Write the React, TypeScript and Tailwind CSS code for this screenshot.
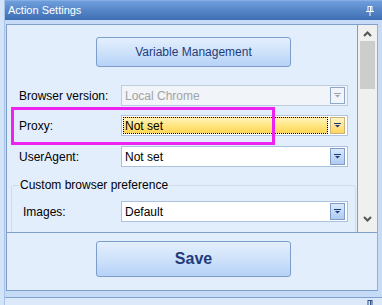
import React from "react";

const FONT = "font-['Liberation_Sans',Arial,sans-serif]";

function Arrow({ color = "#1c3b7c" }: { color?: string }) {
  return (
    <svg width="7" height="5" viewBox="0 0 7 5">
      <rect x="0" y="0" width="7" height="1" fill={color} />
      <polygon points="1,2 6,2 3.5,4.6" fill={color} />
    </svg>
  );
}

function Combo({ value, variant }: { value: string; variant?: "disabled" | "focus" }) {
  if (variant === "disabled") {
    return (
      <div className="w-[227px] h-[21px] border border-[#bccbdd] bg-[#f1f4f9] flex items-center">
        <span className="flex-1 pl-[3px] text-[12px] text-[#a3a3a3]">{value}</span>
        <div className="w-[15px] h-[17px] mr-[2px] border border-[#8fa6c6] flex items-center justify-center">
          <Arrow color="#9aa3ae" />
        </div>
      </div>
    );
  }
  if (variant === "focus") {
    return (
      <div className="w-[227px] h-[21px] border border-[#b2c5de] bg-white flex items-center">
        <div className="flex-1 h-[17px] ml-[1px] mr-[2px] border border-dotted border-black bg-gradient-to-b from-[#fff3b8] via-[#ffe680] to-[#ffd552] flex items-center">
          <span className="pl-[1px] text-[12px] text-black">{value}</span>
        </div>
        <div className="w-[15px] h-[17px] mr-[2px] border border-[#c9b37a] bg-gradient-to-b from-[#fff4c4] to-[#ffd65a] flex items-center justify-center">
          <Arrow />
        </div>
      </div>
    );
  }
  return (
    <div className="w-[227px] h-[21px] border border-[#abc1de] bg-white flex items-center">
      <span className="flex-1 pl-[3px] text-[12px] text-black">{value}</span>
      <div className="w-[15px] h-[17px] mr-[2px] border border-[#7f9dc6] bg-gradient-to-b from-[#dae8fc] to-[#aecbf3] flex items-center justify-center">
        <Arrow />
      </div>
    </div>
  );
}

function Row({ label, children, labelW = "w-[114px]", pad = "pl-[12px]" }: { label: string; children: React.ReactNode; labelW?: string; pad?: string }) {
  return (
    <div className="flex items-center">
      <span className={`${labelW} ${pad} shrink-0 text-[12px] text-black`}>{label}</span>
      {children}
    </div>
  );
}

function Pin({ color = "white" }: { color?: string }) {
  return (
    <svg width="8" height="10" viewBox="0 0 8 10">
      <rect x="2" y="0.5" width="4" height="5" fill="none" stroke={color} />
      <rect x="4" y="1" width="1" height="4" fill={color} />
      <rect x="0" y="5" width="8" height="1" fill={color} />
      <rect x="3.5" y="6" width="1" height="4" fill={color} />
    </svg>
  );
}

function Chevron({ up }: { up?: boolean }) {
  return (
    <svg width="9" height="6" viewBox="0 0 9 6">
      <polyline
        points={up ? "1,5 4.5,1.5 8,5" : "1,1 4.5,4.5 8,1"}
        fill="none"
        stroke="#555"
        strokeWidth="2"
      />
    </svg>
  );
}

export default function App() {
  return (
    <div className={`${FONT} w-[382px] h-[305px] bg-[#c6dbf6] flex overflow-hidden`}>
      <div className="w-[5px] shrink-0 bg-[#d3e3f8] border-r border-[#a9c3e6]" />
      <div className="flex-1 flex flex-col">
        <div className="h-[20px] shrink-0 bg-gradient-to-b from-[#6f9edc] to-[#3e6eb3] border-t border-[#86aee3] flex items-center justify-between pl-[3px] pr-[8px]">
          <span className="text-[11px] text-white">Action Settings</span>
          <Pin />
        </div>
        <div className="pt-[4px] pl-[1px] shrink-0">
          <div className="w-[372px] h-[267px] border border-[#7f9fca] border-r-[#a5acb6] flex flex-col bg-[#e3eefd]">
            <div className="h-[207px] flex shrink-0">
              <div className="relative w-[351px] overflow-hidden border-r border-[#7f9fca] flex flex-col">
                <button className="shrink-0 mt-[12px] ml-[89px] w-[195px] h-[30px] rounded-[3px] border border-[#7d9dcb] bg-gradient-to-b from-[#e3effd] via-[#cfe2fa] to-[#b5d2f7] text-[12px] text-[#1f3c7a]">
                  Variable Management
                </button>
                <div className="shrink-0 mt-[18px]">
                  <Row label="Browser version:">
                    <Combo value="Local Chrome" variant="disabled" />
                  </Row>
                </div>
                <div className="shrink-0 mt-[9px]">
                  <Row label="Proxy:">
                    <Combo value="Not set" variant="focus" />
                  </Row>
                </div>
                <div className="shrink-0 mt-[10px]">
                  <Row label="UserAgent:">
                    <Combo value="Not set" />
                  </Row>
                </div>
                <fieldset className="shrink-0 mt-[11px] ml-[4px] mr-[1px] h-[80px] border border-[#d3dbe4] rounded-[3px]">
                  <legend className="ml-[7px] px-[1px] text-[12px] leading-[14px] text-black">
                    Custom browser preference
                  </legend>
                  <div className="mt-[9px]">
                    <Row label="Images:" labelW="w-[109px]" pad="pl-[11px]">
                      <Combo value="Default" />
                    </Row>
                  </div>
                </fieldset>
                <div className="absolute left-[4px] top-[82px] w-[264px] h-[38px] border-[3px] border-[#ee22ee]" />
              </div>
              <div className="flex-1 bg-[#f0f0f0] flex flex-col items-center">
                <div className="h-[16px] flex items-center justify-center pt-[2px]">
                  <Chevron up />
                </div>
                <div className="w-[15px] h-[48px] bg-[#cdcdcd]" />
                <div className="flex-1" />
                <div className="h-[16px] flex items-center justify-center mb-[5px]">
                  <Chevron />
                </div>
              </div>
            </div>
            <div className="flex-1 border-t border-[#7f9fca] bg-[#e3eefd]">
              <button className="mt-[8px] ml-[89px] w-[195px] h-[36px] rounded-[3px] border border-[#7d9dcb] bg-gradient-to-b from-[#e3effd] via-[#cfe2fa] to-[#b5d2f7] text-[16px] font-bold text-[#1f3c7a]">
                Save
              </button>
            </div>
          </div>
        </div>
        <div className="h-[6px] shrink-0" />
        <div className="flex-1 border-t border-[#7fa2cf] bg-[#dce9fa] flex justify-end pr-[8px] pt-[2px]">
          <Pin color="#2b4f86" />
        </div>
      </div>
    </div>
  );
}
